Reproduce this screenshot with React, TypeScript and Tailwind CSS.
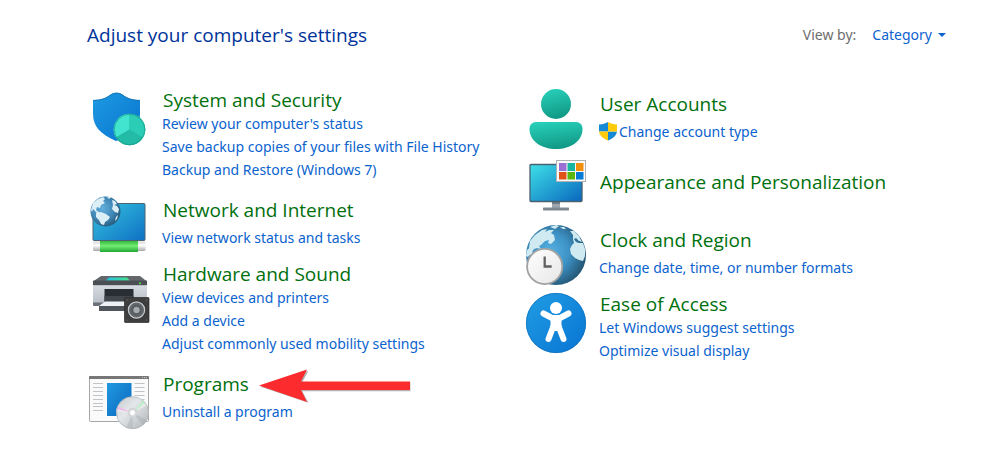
import type { ReactNode } from "react";

function SecurityIcon() {
  return (
    <svg viewBox="0 0 64 64" className="size-16 shrink-0" aria-hidden="true">
      <defs>
        <linearGradient id="shield" x1="0" y1="0" x2="1" y2="1">
          <stop offset="0" stopColor="#1e9be2" />
          <stop offset="1" stopColor="#0872cf" />
        </linearGradient>
      </defs>
      <path d="M6 12c8 0 13-2 17-5 4-3 9-3 13 0 4 3 9 5 17 5v14c0 14-8 22-24 27C13 46 6 38 6 26z" fill="url(#shield)" />
      <path d="M6 12.4c8 0 13-2 17-5 4-3 9-3 13 0 4 3 9 5 17 5" fill="none" stroke="#1577b4" strokeWidth="1" />
      <circle cx="42.5" cy="41.5" r="15.7" fill="#24bea9" />
      <path d="M42.5 41.5V25.8A15.7 15.7 0 0 0 29 49.6z" fill="#42e4d0" />
      <path d="M42.5 41.5V25.8A15.7 15.7 0 0 1 56 49.6z" fill="#2bcdb6" />
      <path d="M42.5 41.5L29 49.6A15.7 15.7 0 0 0 56 49.6z" fill="#22bba6" />
      <circle cx="42.5" cy="41.5" r="15.3" fill="none" stroke="#159682" strokeWidth=".7" />
    </svg>
  );
}

function NetworkIcon() {
  return (
    <svg viewBox="0 0 64 64" className="size-16 shrink-0" aria-hidden="true">
      <defs>
        <linearGradient id="netScreen" x1="0" y1="0" x2="1" y2="1">
          <stop offset="0" stopColor="#35c4df" />
          <stop offset="1" stopColor="#0f70c4" />
        </linearGradient>
        <radialGradient id="netGlobe" cx=".4" cy=".4" r=".65">
          <stop offset="0" stopColor="#62b0dc" />
          <stop offset=".6" stopColor="#3f86b5" />
          <stop offset="1" stopColor="#285878" />
        </radialGradient>
        <linearGradient id="cable" x1="0" y1="0" x2="0" y2="1">
          <stop offset="0" stopColor="#35b83f" />
          <stop offset=".45" stopColor="#74ec72" />
          <stop offset="1" stopColor="#20a935" />
        </linearGradient>
        <linearGradient id="plug" x1="0" y1="0" x2="0" y2="1">
          <stop offset="0" stopColor="#d5d5d5" />
          <stop offset=".4" stopColor="#ffffff" />
          <stop offset="1" stopColor="#a9a9a9" />
        </linearGradient>
      </defs>
      <rect x="6" y="9.5" width="52" height="37" rx="1" fill="url(#netScreen)" stroke="#4c6472" />
      <rect x="6" y="47.500" width="52.500" height="9.500" rx="1.500" fill="url(#plug)" />
      <rect x="13" y="47" width="38" height="11" fill="url(#cable)" />
      <circle cx="18.500" cy="17.500" r="15" fill="url(#netGlobe)" />
      <g fill="#dceff6">
        <path d="M6 9l5-4 5-2 2 2-2 2 2 2-4 2-1 3-3-1-1 3 4 3-3 0-4-4-1 3-1-2z" />
        <path d="M9 19l5-1 5 2 4 3-2 3-3 2-1 3-3-1-2-4-3-3z" />
        <path d="M20 3l4 0-2 2zM25 6l3 1 2 3-3 1 3 1 2 3-1 4-3-1-3-3 1-4z" />
        <path d="M29 23l2-2-1 4-2 2z" />
      </g>
    </svg>
  );
}

function HardwareIcon() {
  return (
    <svg viewBox="0 0 64 64" className="size-16 shrink-0" aria-hidden="true">
      <defs>
        <linearGradient id="printerBody" x1="0" y1="0" x2="0" y2="1">
          <stop offset="0" stopColor="#d6dbe1" />
          <stop offset="1" stopColor="#b4bac3" />
        </linearGradient>
        <linearGradient id="scan" x1="0" y1="0" x2="1" y2="0">
          <stop offset="0" stopColor="#24bfe6" />
          <stop offset="1" stopColor="#46e58b" />
        </linearGradient>
        <radialGradient id="cone">
          <stop offset="0" stopColor="#b9bec2" />
          <stop offset=".35" stopColor="#878c90" />
          <stop offset=".45" stopColor="#55595c" />
          <stop offset="1" stopColor="#6d7276" />
        </radialGradient>
      </defs>
      <path d="M14 14h39l7 5.500H6z" fill="#64686c" />
      <path d="M22 15.500h18l3 3.200H18.500z" fill="url(#scan)" />
      <rect x="6" y="18.500" width="54" height="5" rx=".8" fill="#4b4f53" />
      <rect x="52" y="20.500" width="2" height="1.600" fill="#4fe34b" />
      <path d="M6 23.500h54v19a1.500 1.500 0 0 1-1.500 1.500h-51A1.500 1.500 0 0 1 6 42.500z" fill="url(#printerBody)" />
      <path d="M6 40.500h54v2a1.500 1.500 0 0 1-1.500 1.500h-51A1.500 1.500 0 0 1 6 42.500z" fill="#6a7078" />
      <path d="M17.500 27h29v13h-29z" fill="#292e33" />
      <path d="M17.500 34h29v6h-29z" fill="#41474c" />
      <path d="M12 44h28v5H12z" fill="#4f555b" />
      <path d="M18 39.500h23V44H12z" fill="#edf1f5" />
      <rect x="37.500" y="35.500" width="24.500" height="25" rx=".8" fill="#3e3e3e" stroke="#292929" strokeWidth=".7" />
      <circle cx="49.500" cy="48" r="9.500" fill="#303234" />
      <circle cx="49.500" cy="48" r="8.200" fill="url(#cone)" stroke="#c7cbce" strokeWidth="1.200" />
      <circle cx="49.500" cy="48" r="2.900" fill="#a5acb1" />
      <g fill="#777">
        <circle cx="40" cy="38" r=".6" />
        <circle cx="59.500" cy="38" r=".6" />
        <circle cx="40" cy="58" r=".6" />
        <circle cx="59.500" cy="58" r=".6" />
      </g>
    </svg>
  );
}

function ProgramsIcon() {
  return (
    <svg viewBox="0 0 64 64" className="size-16 shrink-0" aria-hidden="true">
      <defs>
        <linearGradient id="appPage" x1="0" y1="0" x2="1" y2="1">
          <stop offset="0" stopColor="#2199e1" />
          <stop offset="1" stopColor="#0867bc" />
        </linearGradient>
        <linearGradient id="disc" x1="0" y1="0" x2="1" y2="1">
          <stop offset="0" stopColor="#c5c9cc" />
          <stop offset=".4" stopColor="#e4e7e9" />
          <stop offset="1" stopColor="#aeb3b7" />
        </linearGradient>
      </defs>
      <rect x="2.500" y="8.500" width="59" height="45" rx="1" fill="#fafafa" stroke="#a6a6a6" />
      <path d="M2 11V9a1 1 0 0 1 1-1h58a1 1 0 0 1 1 1v2z" fill="#777" />
      <path d="M55 9.500h1m1 0h1m1 0h1" stroke="#ddd" strokeWidth=".8" />
      <path d="M6 15.500h10M6 19.500h10M6 23.500h10M6 27.500h10M6 31.500h10M6 35.500h10M6 38.500h10M6 42.500h10M47.500 15.500h10M47.500 19.500h10M47.500 23.500h10M47.500 27.500h10M47.500 31.500h10" stroke="#c2c5c7" />
      <rect x="20" y="15" width="24.500" height="33" fill="url(#appPage)" />
      <circle cx="45.500" cy="44.700" r="16.300" fill="url(#disc)" />
      <path d="M45.500 44.700L30 39.500l-1 4zM45.500 44.700L60 37.500l-3-4z" fill="#f2f3f4" opacity=".6" />
      <path d="M45.500 44.700L30.500 38.500l-.8 2.500z" fill="#f3b8ed" />
      <path d="M45.500 44.700L56 32.500l2 2z" fill="#baf0c7" />
      <path d="M45.500 44.700L39 60h7zM45.500 44.700L60 52l-4 5z" fill="#9fa6ab" opacity=".35" />
      <circle cx="45.500" cy="44.700" r="16" fill="none" stroke="#a8acaf" strokeWidth=".6" />
      <circle cx="45.500" cy="44.700" r="5" fill="#d2d5d7" />
      <circle cx="45.500" cy="44.700" r="2.500" fill="#fff" stroke="#f0f0f0" />
    </svg>
  );
}

function UserIcon() {
  return (
    <svg viewBox="0 0 64 64" className="size-16 shrink-0" aria-hidden="true">
      <defs>
        <linearGradient id="person" x1="0" y1="0" x2=".25" y2="1">
          <stop offset="0" stopColor="#29d3bd" />
          <stop offset="1" stopColor="#129b87" />
        </linearGradient>
      </defs>
      <circle cx="32" cy="16" r="15" fill="url(#person)" />
      <path d="M12 34h40c4 0 6.500 3 6.500 7C58.500 53 47 61 32 61S5.500 53 5.500 41c0-4 2.500-7 6.500-7z" fill="url(#person)" />
    </svg>
  );
}

function AppearanceIcon() {
  return (
    <svg viewBox="0 0 64 64" className="size-16 shrink-0" aria-hidden="true">
      <defs>
        <linearGradient id="display" x1="0" y1="0" x2="1" y2="1">
          <stop offset="0" stopColor="#3ee0e8" />
          <stop offset="1" stopColor="#0967be" />
        </linearGradient>
      </defs>
      <path d="M28 46h8v6h-8z" fill="#9ca6af" />
      <path d="M28 46h8v2h-8z" fill="#737d86" />
      <rect x="19" y="51.500" width="26" height="3" rx=".7" fill="#7c8790" />
      <rect x="6" y="8.500" width="52" height="37" rx="1" fill="url(#display)" stroke="#47616f" strokeWidth="1.300" />
      <rect x="32.500" y="4.500" width="29" height="21" fill="#fafafa" stroke="#aeb1b3" />
      <rect x="35" y="7" width="7.500" height="8" fill="#9b70d5" />
      <rect x="43.500" y="7" width="7.500" height="8" fill="#18b5a0" />
      <rect x="52" y="7" width="7.500" height="8" fill="#f2900e" />
      <rect x="35" y="16" width="7.500" height="7.500" fill="#e05215" />
      <rect x="43.500" y="16" width="7.500" height="7.500" fill="#5bb610" />
      <rect x="52" y="16" width="7.500" height="7.500" fill="#057bd7" />
    </svg>
  );
}

function ClockIcon() {
  return (
    <svg viewBox="0 0 64 64" className="size-16 shrink-0" aria-hidden="true">
      <defs>
        <radialGradient id="earth" cx=".4" cy=".45" r=".65">
          <stop offset="0" stopColor="#55b2e2" />
          <stop offset=".5" stopColor="#3d91c4" />
          <stop offset="1" stopColor="#204d68" />
        </radialGradient>
        <linearGradient id="dial" x1="0" y1="0" x2="1" y2="1">
          <stop offset="0" stopColor="#fff" />
          <stop offset="1" stopColor="#e6e6e6" />
        </linearGradient>
      </defs>
      <circle cx="32" cy="31" r="30" fill="url(#earth)" />
      <g fill="#cfeaf0">
        <path d="M6 17l5-6 7-5 5-1-2 3 4-2 5 0-3 3 3 2 1 5-4 4-3-1 1-3-4 1-4 4-2 1 2 3-4-1-3 1-2 3 3 1-3 3-4-1-1-4 2-3z" />
        <path d="M26 3l6-2 3 1-4 3zM36 3l4 0 2 2-3 0zM3 25l3 5-2 3-2-1z" />
        <path d="M46 7l4 0 5 5 3 6-3-1-3-3-2 1 2 3 3 1 4 0 2 6 0 7-2 5-4-1-4-2-4-4-1-5 2-4 2-2-1-4 0-4z" />
      </g>
      <circle cx="20.700" cy="42.500" r="17.600" fill="url(#dial)" stroke="#a2a2a2" strokeWidth="1.800" />
      <path d="M20.700 32.500v10h7" fill="none" stroke="#626262" strokeWidth="2.300" />
    </svg>
  );
}

function AccessIcon() {
  return (
    <svg viewBox="0 0 64 64" className="size-16 shrink-0" aria-hidden="true">
      <defs>
        <linearGradient id="access" x1="0" y1="0" x2="1" y2="1">
          <stop offset="0" stopColor="#219de3" />
          <stop offset="1" stopColor="#0874d3" />
        </linearGradient>
      </defs>
      <circle cx="32" cy="31" r="30" fill="url(#access)" />
      <circle cx="32" cy="31" r="29.600" fill="none" stroke="#1070b9" strokeWidth=".7" />
      <circle cx="32" cy="16" r="6" fill="#fff" />
      <path d="M19.500 21.500L28 26h8l8.500-4.500" fill="none" stroke="#fff" strokeWidth="6" strokeLinecap="round" strokeLinejoin="round" />
      <path d="M26.500 25h11v10l-3 4h-5l-3-4z" fill="#fff" />
      <path d="M29.500 34l-5 13M34.500 34l5 13" fill="none" stroke="#fff" strokeWidth="6" strokeLinecap="round" />
    </svg>
  );
}

function AdminShield() {
  return (
    <svg viewBox="0 0 18 20" className="h-5 w-[18px] shrink-0" aria-hidden="true">
      <defs>
        <clipPath id="adminClip">
          <path d="M0 2.500c4 0 6-1 9-2.500 3 1.500 5 2.500 9 2.500v6c0 5-4 8-9 10-5-2-9-5-9-10z" />
        </clipPath>
      </defs>
      <g clipPath="url(#adminClip)">
        <path d="M0 0h9v9.500H0zM9 9.500h9V20H9z" fill="#1588d6" />
        <path d="M9 0h9v9.500H9zM0 9.500h9V20H0z" fill="#fdca0c" />
      </g>
    </svg>
  );
}

function Arrow() {
  return (
    <svg viewBox="0 0 152 36" className="absolute top-[-4px] left-full ml-[10px] h-9 w-[152px]" aria-hidden="true">
      <path d="M1 18L49 2l-6 11.500h108v9H43L49 34z" fill="#777" opacity=".55" transform="translate(.4 .8)" />
      <path d="M0 17.500L48 1.500l-6 12h109v8.500H42l6 12z" fill="#fc2b2d" />
    </svg>
  );
}

type Category = {
  title: string;
  icon: ReactNode;
  links: string[];
  shield?: boolean;
  marked?: boolean;
};

const left: Category[] = [
  {
    title: "System and Security",
    icon: <SecurityIcon />,
    links: [
      "Review your computer's status",
      "Save backup copies of your files with File History",
      "Backup and Restore (Windows 7)",
    ],
  },
  { title: "Network and Internet", icon: <NetworkIcon />, links: ["View network status and tasks"] },
  {
    title: "Hardware and Sound",
    icon: <HardwareIcon />,
    links: ["View devices and printers", "Add a device", "Adjust commonly used mobility settings"],
  },
  { title: "Programs", icon: <ProgramsIcon />, links: ["Uninstall a program"], marked: true },
];

const right: Category[] = [
  { title: "User Accounts", icon: <UserIcon />, links: ["Change account type"], shield: true },
  { title: "Appearance and Personalization", icon: <AppearanceIcon />, links: [] },
  { title: "Clock and Region", icon: <ClockIcon />, links: ["Change date, time, or number formats"] },
  {
    title: "Ease of Access",
    icon: <AccessIcon />,
    links: ["Let Windows suggest settings", "Optimize visual display"],
  },
];

function textLayout(count: number) {
  if (count === 0) return "pt-[14px]";
  if (count === 1) return "gap-1 pt-1";
  return "pb-[9px]";
}

function CategoryList({ items }: { items: Category[] }) {
  return (
    <div className="flex flex-col gap-1">
      {items.map((item) => (
        <section key={item.title} className="flex items-start gap-3">
          {item.icon}
          <div className={`flex flex-col items-start ${textLayout(item.links.length)}`}>
            <h2 className="relative font-['Open_Sans','Noto_Sans',sans-serif] text-[19px] leading-6 whitespace-nowrap text-[#00700d]">
              <a href="#" className="hover:underline">
                {item.title}
              </a>
              {item.marked && <Arrow />}
            </h2>
            {item.links.length > 0 && (
              <ul className="-ml-px text-[14px] leading-[23px] text-[#0b63ce]">
                {item.links.map((link) => (
                  <li key={link} className="flex items-center gap-0.5 whitespace-nowrap">
                    {item.shield && <AdminShield />}
                    <a href="#" className="hover:underline">
                      {link}
                    </a>
                  </li>
                ))}
              </ul>
            )}
          </div>
        </section>
      ))}
    </div>
  );
}

export default function App() {
  return (
    <main className="min-h-screen bg-white pt-5 pr-[39px] pb-6 pl-[87px] font-['Noto_Sans','Open_Sans',sans-serif]">
      <header className="flex items-center justify-between pr-[15px]">
        <h1 className="font-['Open_Sans','Noto_Sans',sans-serif] text-[19px] leading-[30px] text-[#003399]">
          Adjust your computer's settings
        </h1>
        <div className="flex items-center gap-4 text-[14px] leading-5">
          <label htmlFor="view-by" className="text-[#6d6d6d]">
            View by:
          </label>
          <div className="flex items-center">
            <select
              id="view-by"
              defaultValue="category"
              className="field-sizing-content cursor-pointer appearance-none bg-transparent text-[#0b63ce]"
            >
              <option value="category">Category</option>
            </select>
            <svg viewBox="0 0 8 4" className="ml-1.5 h-1 w-2" aria-hidden="true">
              <path d="M0 0h8L4 4z" fill="#0b63ce" />
            </svg>
          </div>
        </div>
      </header>
      <div className="grid grid-cols-2 pt-[38px]">
        <CategoryList items={left} />
        <CategoryList items={right} />
      </div>
    </main>
  );
}
